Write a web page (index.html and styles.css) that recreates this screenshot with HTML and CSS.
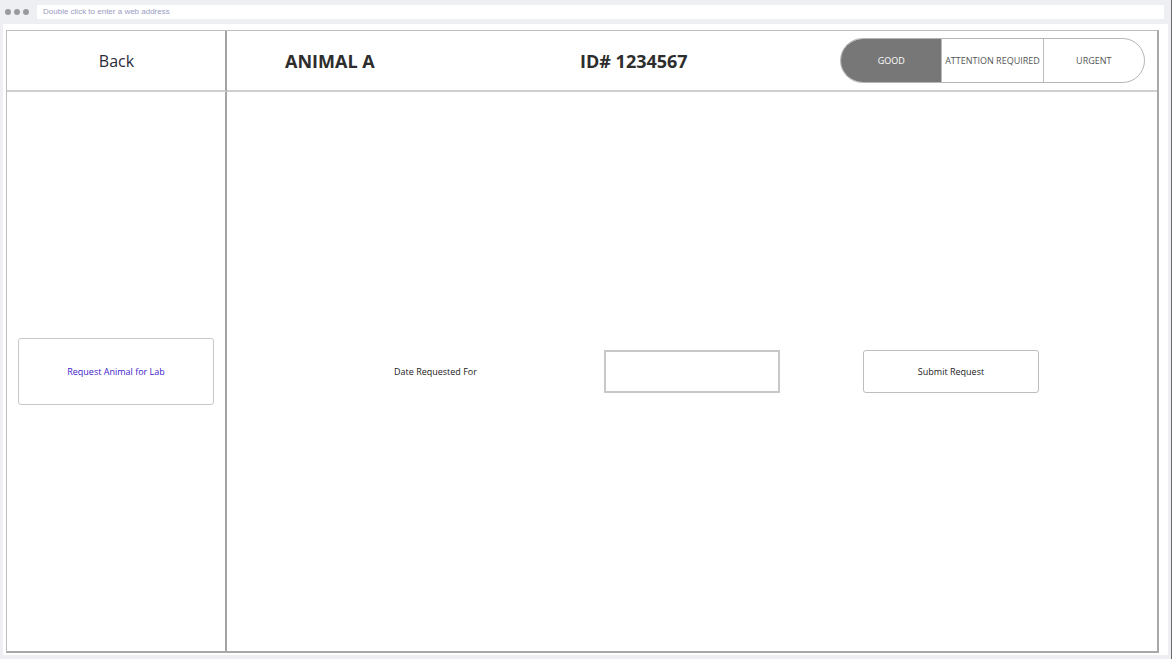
FILE: index.html
```html
<!DOCTYPE html>
<html>
<head>
<meta charset="utf-8">
<link rel="stylesheet" href="styles.css">
</head>
<body>
<div class="chrome">
  <div class="dots"><span></span><span></span><span></span></div>
  <div class="address">Double click to enter a web address</div>
</div>
<div class="page">
  <div class="grid">
    <div class="cell back-cell">Back</div>
    <div class="cell header-cell">
      <div class="name">ANIMAL A</div>
      <div class="id">ID# 1234567</div>
      <div class="status">
        <div class="seg seg-active">GOOD</div>
        <div class="seg">ATTENTION REQUIRED</div>
        <div class="seg">URGENT</div>
      </div>
    </div>
    <div class="cell side-cell">
      <div class="side-btn">Request Animal for Lab</div>
    </div>
    <div class="cell main-cell">
      <div class="date-label">Date Requested For</div>
      <div class="date-input"></div>
      <div class="submit-btn">Submit Request</div>
    </div>
  </div>
</div>
</body>
</html>
```
FILE: styles.css
```css
html, body {
  margin: 0;
  padding: 0;
}
body {
  background: #eeeff3;
  width: 1172px;
  height: 659px;
  overflow: hidden;
  font-family: "Open Sans", "Noto Sans", sans-serif;
  color: #333;
  box-shadow: inset -1px 0 0 #6a6a70;
}
.chrome {
  height: 24px;
  display: flex;
  align-items: center;
  box-sizing: border-box;
}
.dots {
  display: flex;
  gap: 3px;
  margin-left: 5px;
  width: 32px;
}
.dots span {
  width: 6px;
  height: 6px;
  border-radius: 50%;
  background: #9a9a9e;
}
.address {
  background: #fff;
  height: 14px;
  width: 1127px;
  font-family: "Liberation Sans", Arial, sans-serif;
  font-size: 8px;
  line-height: 14px;
  color: #9a9cc4;
  padding-left: 6px;
  box-sizing: border-box;
}
.page {
  margin-left: 3px;
  width: 1165px;
  height: 631px;
  background: #fff;
  padding: 6px 0 0 3px;
  box-sizing: border-box;
}
.grid {
  width: 1153px;
  height: 623px;
  display: grid;
  grid-template-columns: 220px 1fr;
  grid-template-rows: 61px 1fr;
  box-sizing: border-box;
  border: 1px solid #bdbdbd;
  border-bottom: 2px solid #a8a8a8;
  border-right: 2px solid #a8a8a8;
}
.cell {
  box-sizing: border-box;
}
.back-cell {
  border-right: 2px solid #a4a4a4;
  border-bottom: 2px solid #cfcfcf;
  display: flex;
  align-items: center;
  justify-content: center;
  font-size: 16px;
  color: #2b2b3a;
  padding-left: 1px;
}
.header-cell {
  border-bottom: 2px solid #cfcfcf;
  display: flex;
  align-items: center;
}
.name {
  margin-left: 58px;
  width: 295px;
  font-weight: 700;
  font-size: 18px;
  color: #2d2d2d;
}
.id {
  font-weight: 700;
  font-size: 18px;
  color: #2d2d2d;
}
.status {
  margin-left: auto;
  margin-right: 12px;
  width: 305px;
  height: 45px;
  display: flex;
  border: 1px solid #b5b5b5;
  border-radius: 23px;
  overflow: hidden;
  box-sizing: border-box;
  margin-top: -1px;
}
.seg {
  flex: 1;
  display: flex;
  align-items: center;
  justify-content: center;
  font-size: 9px;
  color: #555;
  border-left: 1px solid #bcbcbc;
  white-space: nowrap;
}
.seg-active {
  background: #777;
  color: #fff;
  border-left: none;
}
.side-cell {
  border-right: 2px solid #a4a4a4;
  display: flex;
  align-items: center;
  padding-left: 11px;
}
.side-btn {
  width: 196px;
  height: 67px;
  box-sizing: border-box;
  border: 1px solid #c8c8c8;
  border-radius: 3px;
  display: flex;
  align-items: center;
  justify-content: center;
  font-size: 9px;
  color: #3d22c9;
}
.main-cell {
  display: flex;
  align-items: center;
}
.date-label {
  margin-left: 167px;
  width: 210px;
  font-size: 9px;
  color: #222;
}
.date-input {
  width: 176px;
  height: 43px;
  box-sizing: border-box;
  border: 2px solid #c8c8c8;
}
.submit-btn {
  margin-left: 83px;
  width: 176px;
  height: 43px;
  box-sizing: border-box;
  border: 1px solid #bdbdbd;
  border-radius: 3px;
  display: flex;
  align-items: center;
  justify-content: center;
  font-size: 9px;
  color: #222;
}
```
